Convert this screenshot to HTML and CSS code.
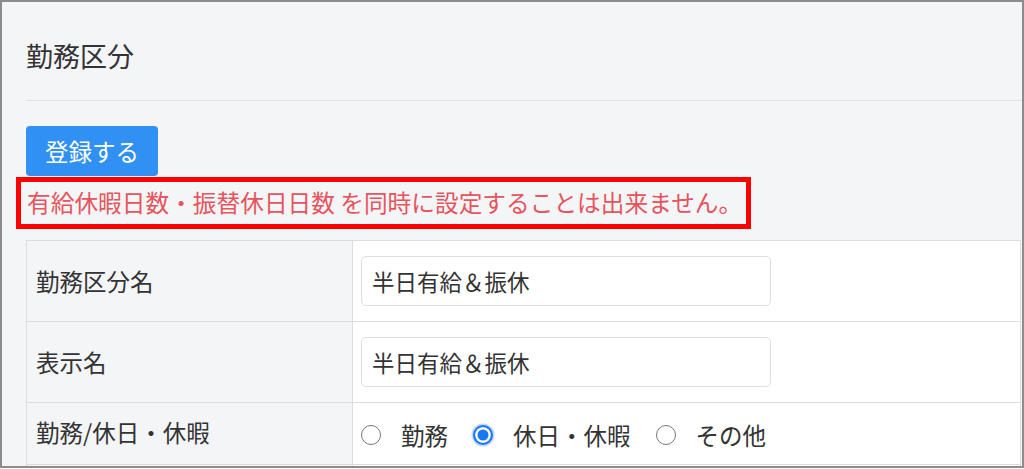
FILE: index.html
```html
<!DOCTYPE html>
<html lang="ja">
<head>
<meta charset="utf-8">
<title>勤務区分</title>
<link rel="stylesheet" href="styles.css">
</head>
<body>
<div class="frame">
  <div class="header">
    <h1 class="title">勤務区分</h1>
  </div>
  <div class="content">
    <button class="btn-primary" type="button">登録する</button>
    <p class="error">有給休暇日数・振替休日日数 を同時に設定することは出来ません。</p>
    <table class="form-table">
      <tr>
        <th class="label">勤務区分名</th>
        <td class="value"><input class="text-input" type="text" value="半日有給＆振休"></td>
      </tr>
      <tr>
        <th class="label">表示名</th>
        <td class="value"><input class="text-input" type="text" value="半日有給＆振休"></td>
      </tr>
      <tr class="radio-row">
        <th class="label">勤務/休日・休暇</th>
        <td class="value">
          <div class="radios">
            <label class="radio-item"><input class="radio" type="radio" name="kind"><span>勤務</span></label>
            <label class="radio-item"><input class="radio" type="radio" name="kind" checked><span>休日・休暇</span></label>
            <label class="radio-item"><input class="radio" type="radio" name="kind"><span>その他</span></label>
          </div>
        </td>
      </tr>
      <tr class="hidden-row">
        <th class="label"></th>
        <td class="value"></td>
      </tr>
    </table>
  </div>
</div>
</body>
</html>
```

FILE: styles.css
```css
html, body {
  margin: 0;
  padding: 0;
  background: #ffffff;
}

body {
  font-family: "Noto Sans CJK JP", "Noto Sans", sans-serif;
  color: #333333;
}

.frame {
  box-sizing: border-box;
  width: 1024px;
  height: 468px;
  border: 2px solid #8c8c8c;
  background: #f4f5f7;
  overflow: hidden;
}

.header {
  margin-left: 24px;
  padding: 37px 0 28px 0;
  border-bottom: 1px solid #dfe1e5;
}

.title {
  margin: 0;
  font-size: 27px;
  font-weight: 400;
  line-height: 33px;
  color: #333333;
}

.content {
  padding-left: 24px;
  padding-top: 25px;
}

.btn-primary {
  display: block;
  width: 132px;
  height: 50px;
  margin: 0;
  padding: 0;
  border: none;
  border-radius: 4px;
  background: #3090f3;
  color: #ffffff;
  font-family: inherit;
  font-size: 23.5px;
  line-height: 50px;
}

.error {
  display: inline-block;
  box-sizing: border-box;
  width: 735px;
  height: 52px;
  margin: 1px 0 11px -10px;
  padding: 0 0 0 6px;
  border: 5px solid #ff0000;
  color: #e6545d;
  font-size: 23.7px;
  line-height: 41px;
  white-space: nowrap;
  vertical-align: top;
}

.form-table {
  width: 995px;
  border-collapse: collapse;
  font-size: 23.5px;
}

.form-table th,
.form-table td {
  border: 1px solid #dadde2;
}

.label {
  width: 316px;
  padding: 0 0 0 9px;
  background: #f4f5f7;
  font-weight: 400;
  text-align: left;
  color: #333333;
}

.value {
  padding: 15px 8px;
  background: #ffffff;
}

.text-input {
  display: block;
  box-sizing: border-box;
  width: 410px;
  height: 50px;
  margin: 0;
  padding: 0 10px;
  border: 1px solid #dcdfe4;
  border-radius: 5px;
  background: #ffffff;
  color: #333333;
  font-family: inherit;
  font-size: 22.5px;
}

.radio-row .value {
  padding: 16px 8px 14px 8px;
}

.radio-row .label {
  padding-bottom: 4px;
}

.hidden-row .value {
  height: 50px;
}

.radios {
  display: flex;
  align-items: center;
  height: 31px;
}

.radio-item {
  display: flex;
  align-items: center;
  margin-right: 25px;
}

.radio {
  -webkit-appearance: none;
  appearance: none;
  box-sizing: border-box;
  width: 20px;
  height: 20px;
  margin: 0 20px 0 0;
  border: 1.5px solid #777777;
  border-radius: 50%;
  background: #ffffff;
}

.radio:checked {
  border: 2px solid #1a78f2;
  background: #1a78f2;
  box-shadow: inset 0 0 0 2.5px #ffffff, 0 0 0 1.5px rgba(120, 170, 250, 0.45);
}
```
